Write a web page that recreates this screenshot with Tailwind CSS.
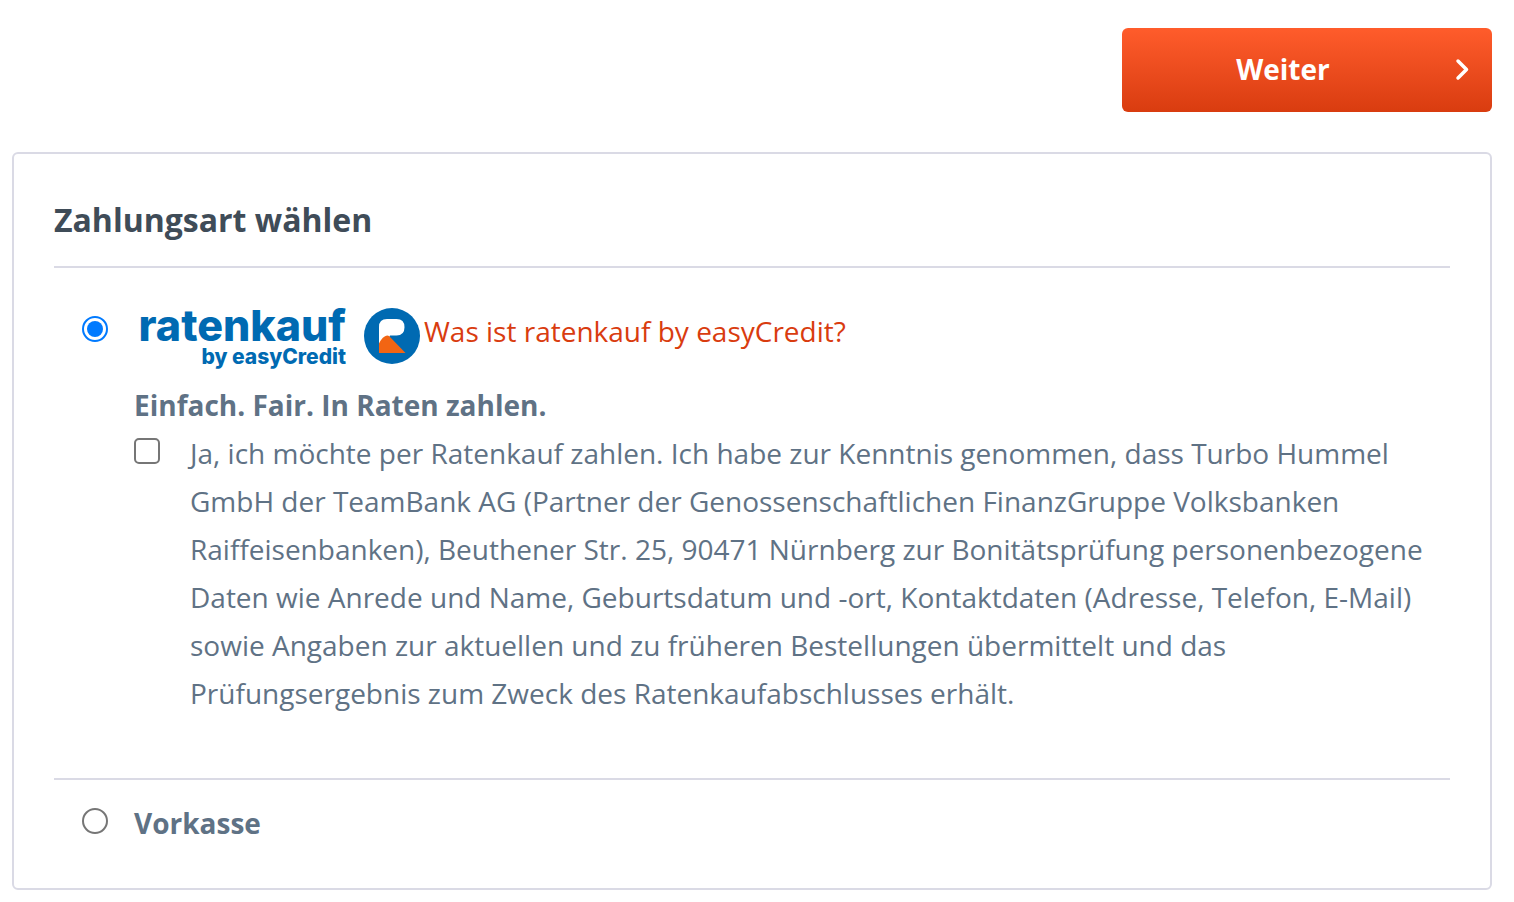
<!DOCTYPE html>
<html lang="de">
<head>
<meta charset="utf-8">
<meta name="viewport" content="width=device-width, initial-scale=1">
<title>Zahlungsart wählen</title>
<script src="https://cdn.jsdelivr.net/npm/@tailwindcss/browser@4"></script>
</head>
<body class="bg-white font-['Open_Sans',sans-serif] text-[28px] leading-[48px] text-[#5f7285]">
<main class="pt-7 pr-[22px] pb-3 pl-3">
  <div class="flex justify-end">
    <button type="submit" form="payment" class="flex h-[84px] w-[370px] items-center rounded-md bg-linear-to-b from-[#ff5c2b] to-[#d93c0f] pr-5 pb-0.5 font-bold text-white">
      <span class="flex-1 text-center">Weiter</span>
      <svg class="ml-2 h-6 w-5" viewBox="0 0 20 24" fill="none" stroke="#fff" stroke-width="3.500" stroke-linecap="round" stroke-linejoin="round" aria-hidden="true"><path d="M6 4 14.500 12.500 6 21"/></svg>
    </button>
  </div>

  <form id="payment" class="mt-10 rounded-md border-2 border-[#dadae5] px-10 pb-[41px]">
    <h1 class="border-b-2 border-[#dadae5] pt-10 pb-5 text-[32px] leading-[52px] font-bold text-[#3f4c58]">Zahlungsart wählen</h1>

    <section class="flex items-start border-b-2 border-[#dadae5] pt-[39px] pb-[61px] pl-7">
      <input id="ratenkauf" type="radio" name="zahlungsart" checked aria-label="ratenkauf by easyCredit" class="mt-[9px] grid size-[26px] shrink-0 appearance-none place-items-center rounded-full border-2 border-[#767676] before:size-4 before:rounded-full checked:border-[#007aff] checked:before:bg-[#007aff]">
      <div class="ml-[26px] min-w-0 flex-1">
        <div class="flex h-[74px] items-start">
          <label for="ratenkauf" class="flex items-start pl-1">
            <span class="flex w-[208px] flex-col items-end font-['Inter',sans-serif] whitespace-nowrap text-[#006ab2]">
              <span class="text-[43px] leading-9 font-extrabold">ratenkauf</span>
              <span class="text-[21px] leading-7 font-extrabold">by easyCredit</span>
            </span>
            <svg class="mt-px ml-[18px] size-14" viewBox="0 0 56 56" aria-hidden="true">
              <circle cx="28" cy="28" r="28" fill="#006ab2"/>
              <path d="M15 38V19Q15 11 23 11H32.500Q40.500 11 40.500 19.300Q40.500 27.500 32.500 27.500H26L22 36Z" fill="#fff"/>
              <path d="M15 45V35.500C17.500 30.500 20 28 23.500 27.500Q25 27.500 26.500 29.500L41.500 45Z" fill="#f26513"/>
            </svg>
          </label>
          <a href="#" class="ml-1 text-[#d93c0f]">Was ist ratenkauf by easyCredit?</a>
        </div>
        <p class="font-bold">Einfach. Fair. In Raten zahlen.</p>
        <div class="flex items-start">
          <input id="zustimmung" type="checkbox" class="mt-[9px] size-[26px] shrink-0 appearance-none rounded-[5px] border-2 border-[#767676] checked:bg-[#007aff]">
          <label for="zustimmung" class="ml-[30px] flex-1">Ja, ich möchte per Ratenkauf zahlen. Ich habe zur Kenntnis genommen, dass Turbo Hummel GmbH der TeamBank AG (Partner der Genossenschaftlichen FinanzGruppe Volksbanken Raiffeisenbanken), Beuthener Str. 25, 90471 Nürnberg zur Bonitätsprüfung personenbezogene Daten wie Anrede und Name, Geburtsdatum und -ort, Kontaktdaten (Adresse, Telefon, E-Mail) sowie Angaben zur aktuellen und zu früheren Bestellungen übermittelt und das Prüfungsergebnis zum Zweck des Ratenkaufabschlusses erhält.</label>
        </div>
      </div>
    </section>

    <section class="flex items-start pt-[19px] pl-7">
      <input id="vorkasse" type="radio" name="zahlungsart" class="mt-[9px] grid size-[26px] shrink-0 appearance-none place-items-center rounded-full border-2 border-[#767676] before:size-4 before:rounded-full checked:border-[#007aff] checked:before:bg-[#007aff]">
      <label for="vorkasse" class="ml-[26px] font-bold">Vorkasse</label>
    </section>
  </form>
</main>
</body>
</html>
